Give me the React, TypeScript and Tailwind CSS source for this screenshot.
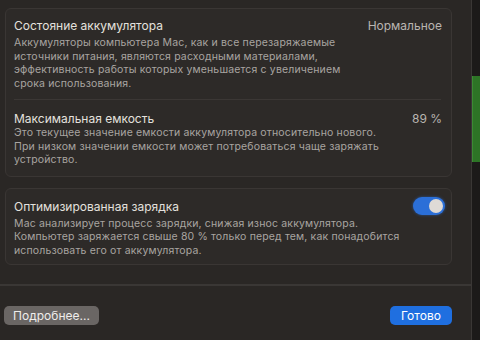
import React from "react";

const font = { fontFamily: "Inter, 'Noto Sans', sans-serif" };

function Toggle() {
    return (
        <div className="w-[32px] h-[18px] rounded-full bg-[#2b6fd8] flex items-center justify-end px-[2px] shadow-[0_0_3px_rgba(43,111,216,0.6)]">
            <div className="w-[14px] h-[14px] rounded-full bg-[#dedad6]" />
        </div>
    );
}

function Desc({ lines, className = "" }: { lines: string[]; className?: string }) {
    return (
        <div className={"text-[10.5px] leading-[13.5px] tracking-[0.15px] text-[#a9a5a1] " + className}>
            {lines.map((l) => (
                <div key={l} className="whitespace-nowrap">{l}</div>
            ))}
        </div>
    );
}

export default function App() {
    return (
        <div className="w-[480px] h-[340px] flex bg-[#1c1a19] overflow-hidden" style={font}>
            {/* dialog */}
            <div className="w-[472px] h-full flex flex-col bg-[#2a2725] border-r border-[#3a3735]">
                <div className="flex flex-col gap-[11px] pl-[5px] pr-[19px] pt-[8px]">
                    {/* battery card */}
                    <div className="h-[169px] rounded-[6px] border border-[#3a3634] bg-[#2d2a28] pl-[8px] pr-[9px] pt-[9px]">
                        <div className="flex justify-between text-[12px] leading-[15px]">
                            <span className="text-[#e4e1de]">Состояние аккумулятора</span>
                            <span className="text-[#b9b5b1]">Нормальное</span>
                        </div>
                        <Desc
                            className="mt-[3px]"
                            lines={[
                                "Аккумуляторы компьютера Mac, как и все перезаряжаемые",
                                "источники питания, являются расходными материалами,",
                                "эффективность работы которых уменьшается с увеличением",
                                "срока использования.",
                            ]}
                        />
                        <div className="mt-[9px] mr-[1px] h-px bg-[#3b3735]" />
                        <div className="mt-[11px] flex justify-between text-[12px] leading-[15px]">
                            <span className="text-[#e4e1de]">Максимальная емкость</span>
                            <span className="text-[#b9b5b1]">89 %</span>
                        </div>
                        <Desc
                            lines={[
                                "Это текущее значение емкости аккумулятора относительно нового.",
                                "При низком значении емкости может потребоваться чаще заряжать",
                                "устройство.",
                            ]}
                        />
                    </div>
                    {/* optimized charging card */}
                    <div className="h-[77px] rounded-[6px] border border-[#3a3634] bg-[#2d2a28] pl-[8px] pr-[6px] pt-[8px] flex justify-between">
                        <div>
                            <div className="mt-[1.5px] text-[12px] leading-[15px] text-[#e4e1de]">Оптимизированная зарядка</div>
                            <Desc
                                className="mt-[3px]"
                                lines={[
                                    "Mac анализирует процесс зарядки, снижая износ аккумулятора.",
                                    "Компьютер заряжается свыше 80 % только перед тем, как понадобится",
                                    "использовать его от аккумулятора.",
                                ]}
                            />
                        </div>
                        <Toggle />
                    </div>
                </div>
                <div className="mt-[19px] h-[2px] bg-[#3a3735]" />
                <div className="flex justify-between items-center pl-[4px] pr-[19px] pt-[20px]">
                    <button className="h-[19px] w-[95px] rounded-[5px] bg-[#6a6664] text-[12px] text-[#efedeb] leading-[19px]">
                        Подробнее...
                    </button>
                    <button className="h-[19px] w-[62px] rounded-[5px] bg-[#1f6fe0] text-[12px] text-white leading-[19px]">
                        Готово
                    </button>
                </div>
            </div>
            {/* window behind */}
            <div className="flex-1 flex flex-col">
                <div className="h-[76px]" />
                <div className="h-[86px] bg-[#2d7426] border-l border-[#3d8a35]" />
            </div>
        </div>
    );
}
